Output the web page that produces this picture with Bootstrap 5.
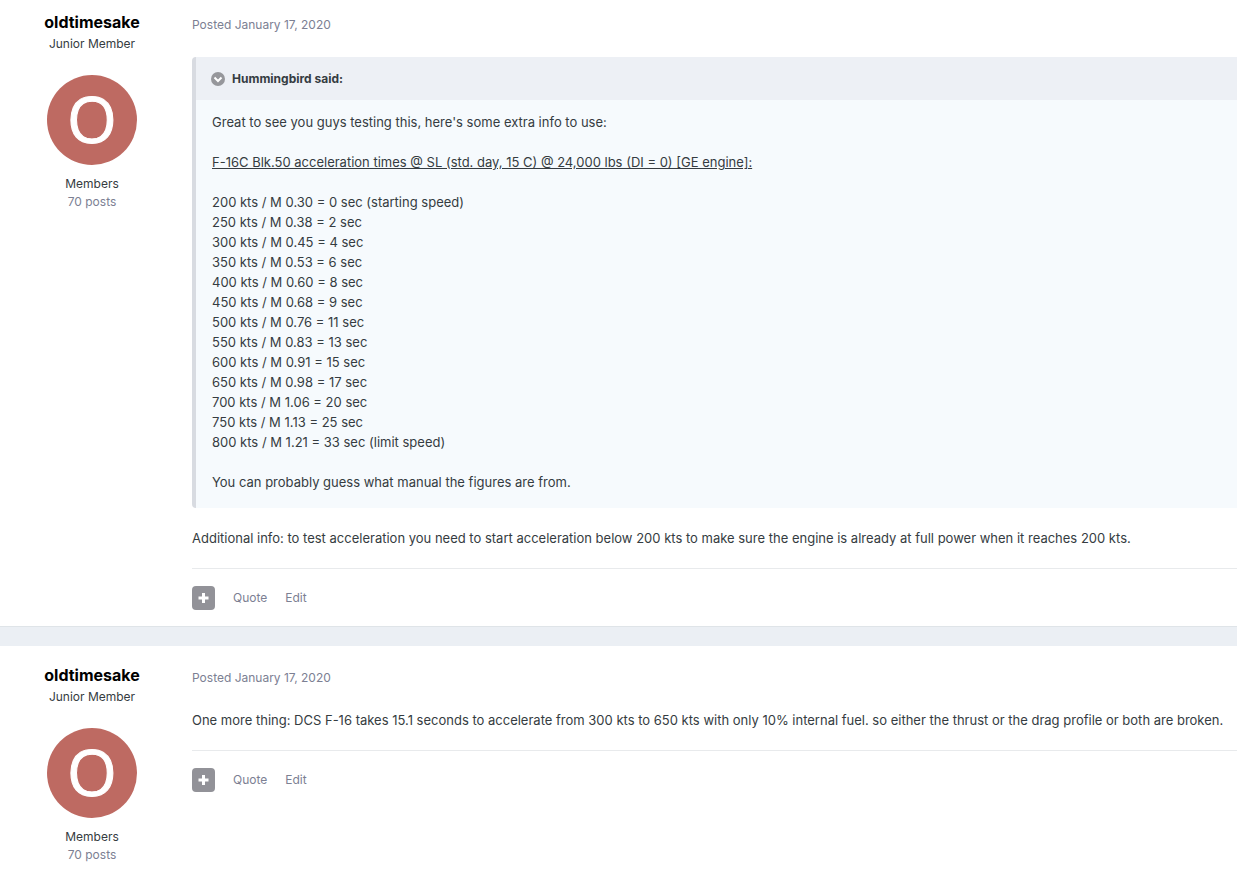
<!DOCTYPE html>
<html lang="en">
<head>
<meta charset="utf-8">
<meta name="viewport" content="width=device-width, initial-scale=1">
<title>Forum topic</title>
<link rel="stylesheet" href="https://cdn.jsdelivr.net/npm/bootstrap@5.3.0/dist/css/bootstrap.min.css">
<style>
body{font-family:Inter,"Liberation Sans",sans-serif;font-size:13px;line-height:20px;color:#353c41;background:#ebeff4}
a{color:inherit;text-decoration:none}
.post{background:#fff}
.post + .post{border-top:1px solid #dfe4e8;box-shadow:inset 0 19px #ebeff4;padding-top:26px}
.author{width:184px;flex:none;padding:12px 0;font-size:12px;line-height:18px}
.author-name{font-size:16px;line-height:20px;font-weight:700;color:#000;margin:0}
.rank{margin-top:3px}
.avatar{width:90px;height:90px;margin:22px 0 10px}
.avatar text{font-family:"Open Sans",sans-serif;font-size:64px;fill:#fff;stroke:#fff;stroke-width:1px;text-anchor:middle}
.muted{color:#7c8093}
.post-main{padding:0 0 16px 8px;min-width:0}
.meta{font-size:12px;padding-top:15px;margin-bottom:22px}
.quote{border-left:4px solid #d8dbe1;background:#f6fafd;border-radius:4px 0 0 4px;overflow:hidden;margin-bottom:20px}
.quote-head{background:#edf0f5;padding:12px 16px 11px 15px;font-size:12px;font-weight:700;gap:7px}
.quote-body{padding:12px 16px 16px}
.quote-body p{margin-bottom:20px}
.quote-body p:last-child{margin:0}
.post-foot{border-top:1px solid #e8eaec;font-size:12px;margin-top:20px;padding-top:17px;gap:18px}
.plus{width:23px;height:24px;border:0;padding:0;background:#929298;border-radius:4px}
</style>
</head>
<body>
<main class="d-flex flex-column min-vh-100">
<article class="post d-flex">
<aside class="author d-flex flex-column align-items-center">
<h3 class="author-name"><a href="#">oldtimesake</a></h3>
<div class="rank">Junior Member</div>
<a href="#" aria-label="oldtimesake"><svg class="avatar d-block" viewBox="0 0 90 90"><circle cx="45" cy="45" r="45" fill="#be6a62"/><text x="45" y="68">O</text></svg></a>
<div>Members</div>
<a class="muted" href="#">70 posts</a>
</aside>
<div class="post-main flex-grow-1">
<div class="meta muted"><a href="#">Posted January 17, 2020</a></div>
<blockquote class="quote">
<div class="quote-head d-flex align-items-center"><svg width="14" height="14" viewBox="0 0 14 14"><circle cx="7" cy="7" r="7" fill="#96979b"/><path d="M3.500 5.500 7 9l3.500-3.500" fill="none" stroke="#fff" stroke-width="2"/></svg><a href="#">Hummingbird said:</a></div>
<div class="quote-body">
<p>Great to see you guys testing this, here's some extra info to use:</p>
<p><u>F-16C Blk.50 acceleration times @ SL (std. day, 15 C) @ 24,000 lbs (DI = 0) [GE engine]:</u></p>
<p>200 kts / M 0.30 = 0 sec (starting speed)<br>250 kts / M 0.38 = 2 sec<br>300 kts / M 0.45 = 4 sec<br>350 kts / M 0.53 = 6 sec<br>400 kts / M 0.60 = 8 sec<br>450 kts / M 0.68 = 9 sec<br>500 kts / M 0.76 = 11 sec<br>550 kts / M 0.83 = 13 sec<br>600 kts / M 0.91 = 15 sec<br>650 kts / M 0.98 = 17 sec<br>700 kts / M 1.06 = 20 sec<br>750 kts / M 1.13 = 25 sec<br>800 kts / M 1.21 = 33 sec (limit speed)</p>
<p>You can probably guess what manual the figures are from.</p>
</div>
</blockquote>
<div>Additional info: to test acceleration you need to start acceleration below 200 kts to make sure the engine is already at full power when it reaches 200 kts.</div>
<div class="post-foot d-flex align-items-center muted"><button class="plus d-flex align-items-center justify-content-center" aria-label="MultiQuote"><svg width="11" height="11" viewBox="0 0 11 11"><path d="M5.500 0v10M.5 5h10" stroke="#fff" stroke-width="3"/></svg></button><a href="#">Quote</a><a href="#">Edit</a></div>
</div>
</article>
<article class="post d-flex flex-grow-1">
<aside class="author d-flex flex-column align-items-center">
<h3 class="author-name"><a href="#">oldtimesake</a></h3>
<div class="rank">Junior Member</div>
<a href="#" aria-label="oldtimesake"><svg class="avatar d-block" viewBox="0 0 90 90"><circle cx="45" cy="45" r="45" fill="#be6a62"/><text x="45" y="68">O</text></svg></a>
<div>Members</div>
<a class="muted" href="#">70 posts</a>
</aside>
<div class="post-main flex-grow-1">
<div class="meta muted"><a href="#">Posted January 17, 2020</a></div>
<div>One more thing: DCS F-16 takes 15.1 seconds to accelerate from 300 kts to 650 kts with only 10% internal fuel. so either the thrust or the drag profile or both are broken.</div>
<div class="post-foot d-flex align-items-center muted"><button class="plus d-flex align-items-center justify-content-center" aria-label="MultiQuote"><svg width="11" height="11" viewBox="0 0 11 11"><path d="M5.500 0v10M.5 5h10" stroke="#fff" stroke-width="3"/></svg></button><a href="#">Quote</a><a href="#">Edit</a></div>
</div>
</article>
</main>
<script src="https://cdn.jsdelivr.net/npm/bootstrap@5.3.0/dist/js/bootstrap.bundle.min.js"></script>
</body>
</html>
